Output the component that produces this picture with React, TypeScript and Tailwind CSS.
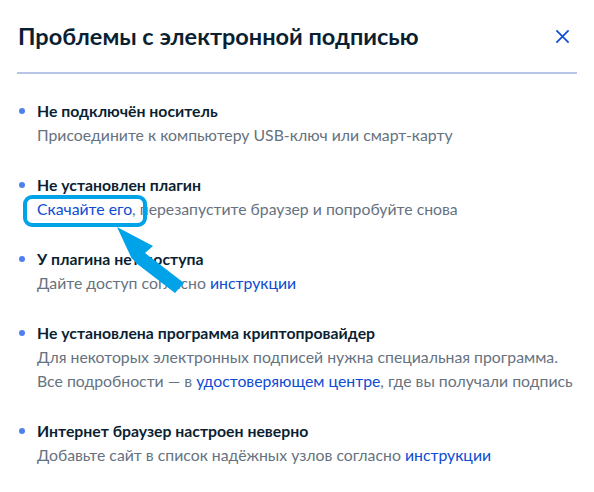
const link = "text-[#0d4cd3]";

type Item = { title: string; desc: React.ReactNode };

const items: Item[] = [
  {
    title: "Не подключён носитель",
    desc: "Присоедините к компьютеру USB-ключ или смарт-карту",
  },
  {
    title: "Не установлен плагин",
    desc: (
      <>
        <span className={link}>Скачайте его</span>, перезапустите браузер и попробуйте снова
      </>
    ),
  },
  {
    title: "У плагина нет доступа",
    desc: (
      <>
        Дайте доступ согласно <span className={link}>инструкции</span>
      </>
    ),
  },
  {
    title: "Не установлена программа криптопровайдер",
    desc: (
      <>
        Для некоторых электронных подписей нужна специальная программа.
        <br />
        Все подробности — в <span className={link}>удостоверяющем центре</span>, где вы получали подпись
      </>
    ),
  },
  {
    title: "Интернет браузер настроен неверно",
    desc: (
      <>
        Добавьте сайт в список надёжных узлов согласно <span className={link}>инструкции</span>
      </>
    ),
  },
];

export default function App() {
  return (
    <main
      className="relative w-[594px] h-[492px] bg-white overflow-hidden px-[17px]"
      style={{ fontFamily: "Lato, 'Open Sans', sans-serif" }}
    >
      <div className="flex items-center justify-between pt-[20px] pl-[1px] pr-[7px]">
        <h1 className="text-[23.5px] leading-[32px] font-bold text-[#0b1f33]">Проблемы с электронной подписью</h1>
        <svg width="15" height="15" viewBox="0 0 16 16" className="text-[#0d4cd3]">
          <path d="M1.5 1.5 L14.5 14.5 M14.5 1.5 L1.5 14.5" stroke="currentColor" strokeWidth="1.8" fill="none" />
        </svg>
      </div>
      <div className="mt-[20px] h-[2px] bg-[#b8c6e6]" />

      <ul className="mt-[25px] flex flex-col gap-[26px]">
        {items.map((it) => (
          <li key={it.title} className="flex">
            <div className="w-[20px] h-[24px] flex items-center pl-[2px]">
              <span className="w-[6px] h-[6px] rounded-full bg-[#4f7ff0]" />
            </div>
            <div className="text-[15.8px] leading-[24px]">
              <div className="font-bold text-[#0b1f33]">{it.title}</div>
              <div className="text-[#66727f]">{it.desc}</div>
            </div>
          </li>
        ))}
      </ul>

      {/* annotation */}
      <div className="absolute left-[23px] top-[195px] w-[124px] h-[32px] rounded-[9px] border-[4px] border-[#00a3e8]" />
      <svg className="absolute left-0 top-0" width="594" height="492" viewBox="0 0 594 492">
        <polygon points="117,227 153,246 145,253 184,283 175,293 136,263 131,257" fill="#00a3e8" />
      </svg>
    </main>
  );
}
